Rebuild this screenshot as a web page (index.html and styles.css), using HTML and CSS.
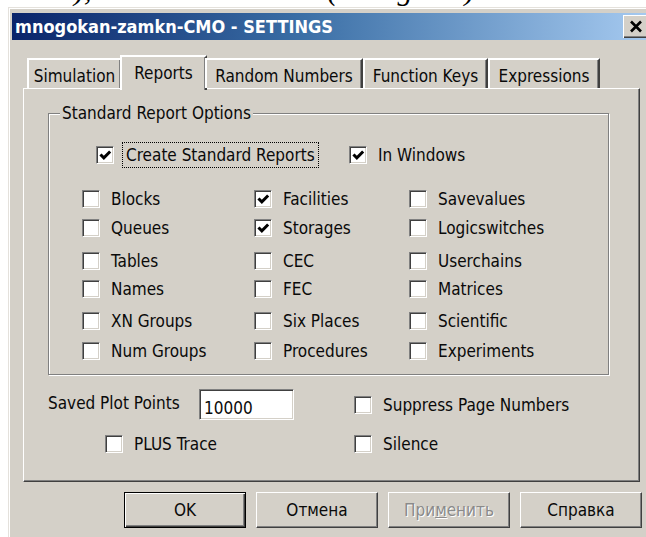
FILE: index.html
```html
<!DOCTYPE html>
<html lang="en">
<head>
<meta charset="utf-8">
<title>mnogokan-zamkn-CMO - SETTINGS</title>
<link rel="stylesheet" href="styles.css">
</head>
<body>
  <div class="doc-line">
    <div class="doc-text"><span class="g1">),</span><span class="g2">(</span><span class="g3">g</span><span class="g4">)</span></div>
  </div>

  <div class="window">
    <div class="titlebar">
      <span class="title">mnogokan-zamkn-CMO - SETTINGS</span>
      <span class="close-btn">
        <svg width="14" height="13" viewBox="0 0 14 13"><path d="M2 1.5 L12 11.5 M12 1.5 L2 11.5" stroke="#000" stroke-width="2.6" fill="none"/></svg>
      </span>
    </div>

    <div class="tabs">
      <div class="tab tab-sim">Simulation</div>
      <div class="tab tab-rep active">Reports</div>
      <div class="tab tab-rnd">Random Numbers</div>
      <div class="tab tab-fk">Function Keys</div>
      <div class="tab tab-exp">Expressions</div>
    </div>

    <div class="panel">
      <fieldset class="group">
        <legend>Standard Report Options</legend>
        <div class="top-row">
          <label class="cb"><span class="box"><svg viewBox="0 0 14 14"><polyline points="3,6.5 6,9.5 11.5,4" /></svg></span><span class="focus">Create Standard Reports</span></label>
          <label class="cb"><span class="box"><svg viewBox="0 0 14 14"><polyline points="3,6.5 6,9.5 11.5,4" /></svg></span>In Windows</label>
        </div>
        <div class="opts">
          <label class="cb"><span class="box"></span>Blocks</label>
          <label class="cb"><span class="box"><svg viewBox="0 0 14 14"><polyline points="3,6.5 6,9.5 11.5,4" /></svg></span>Facilities</label>
          <label class="cb"><span class="box"></span>Savevalues</label>

          <label class="cb"><span class="box"></span>Queues</label>
          <label class="cb"><span class="box"><svg viewBox="0 0 14 14"><polyline points="3,6.5 6,9.5 11.5,4" /></svg></span>Storages</label>
          <label class="cb"><span class="box"></span>Logicswitches</label>

          <label class="cb"><span class="box"></span>Tables</label>
          <label class="cb"><span class="box"></span>CEC</label>
          <label class="cb"><span class="box"></span>Userchains</label>

          <label class="cb"><span class="box"></span>Names</label>
          <label class="cb"><span class="box"></span>FEC</label>
          <label class="cb"><span class="box"></span>Matrices</label>

          <label class="cb"><span class="box"></span>XN Groups</label>
          <label class="cb"><span class="box"></span>Six Places</label>
          <label class="cb"><span class="box"></span>Scientific</label>

          <label class="cb"><span class="box"></span>Num Groups</label>
          <label class="cb"><span class="box"></span>Procedures</label>
          <label class="cb"><span class="box"></span>Experiments</label>
        </div>
      </fieldset>

      <div class="extras">
        <div class="plot-points">
          <span class="plot-label">Saved Plot Points</span>
          <span class="field">10000</span>
        </div>
        <label class="cb"><span class="box"></span>Suppress Page Numbers</label>
        <label class="cb plus"><span class="box"></span>PLUS Trace</label>
        <label class="cb"><span class="box"></span>Silence</label>
      </div>
    </div>

    <div class="buttons">
      <div class="btn default">OK</div>
      <div class="btn">Отмена</div>
      <div class="btn disabled">При<u>м</u>енить</div>
      <div class="btn">Справка</div>
    </div>
  </div>
</body>
</html>
```
FILE: styles.css
```css
* {
  box-sizing: border-box;
}

body {
  margin: 0;
  width: 646px;
  height: 537px;
  overflow: hidden;
  background: #fff;
  font-family: "DejaVu Sans Condensed", "Liberation Sans", Arial, sans-serif;
  font-size: 17px;
  color: #0a0a0a;
}

/* tail of the document line above the dialog: only descenders show */
.doc-line {
  height: 7px;
  overflow: hidden;
  font-family: "Liberation Serif", "Times New Roman", serif;
  font-style: italic;
  font-size: 30px;
  line-height: 30px;
  color: #000;
}

.doc-text {
  display: flex;
  margin-top: -25px;
  white-space: nowrap;
}

.g1 { margin-left: 74px; }
.g2 { margin-left: 236px; }
.g3 { margin-left: 60px; }
.g4 { margin-left: 52px; }

/* dialog frame */
.window {
  margin-left: 8px;
  width: 646px;
  height: 540px;
  padding: 6px 4px 0 4px;
  background: #d4d0c8;
  box-shadow: inset 1px 1px 0 #e4e1dc, inset 2px 2px 0 #fff;
}

.titlebar {
  height: 27px;
  display: flex;
  align-items: center;
  justify-content: space-between;
  padding-left: 3px;
  background: linear-gradient(to right, #0a246a 0%, #3a6ea5 45%, #a6caf0 100%);
}

.title {
  color: #fff;
  font-weight: bold;
  font-size: 18px;
}

.close-btn {
  width: 25px;
  height: 23px;
  margin-right: 2px;
  display: flex;
  align-items: center;
  justify-content: center;
  background: #d4d0c8;
  box-shadow: inset 1px 1px 0 #fff, inset -1px -1px 0 #404040, inset -2px -2px 0 #808080;
}

/* tab strip */
.tabs {
  position: relative;
  z-index: 1;
  display: flex;
  align-items: flex-end;
  height: 35px;
  margin-top: 15px;
  margin-left: 15px;
}

.tab {
  height: 30px;
  margin-bottom: 2px;
  padding-top: 6px;
  text-align: center;
  line-height: 20px;
  background: #d4d0c8;
  border-top: 2px solid #fff;
  border-left: 2px solid #fff;
  border-right: 2px solid #404040;
  box-shadow: inset -1px 0 0 #808080;
}

.tab-sim { width: 95px; }
.tab-rnd { width: 158px; }
.tab-fk { width: 125px; }
.tab-exp { width: 112px; }

.tab.active {
  width: 87px;
  height: 35px;
  margin: 0 -2px;
  padding-top: 6px;
}

/* page of the selected tab */
.panel {
  width: 617px;
  height: 394px;
  margin-top: -2px;
  margin-left: 11px;
  padding-top: 14px;
  border: 1px solid;
  border-color: #fff #404040 #404040 #fff;
  box-shadow: inset -1px -1px 0 #808080;
}

.group {
  width: 561px;
  margin: 0 0 0 24px;
  padding: 0 0 14px 0;
  border: 1px solid #808080;
  box-shadow: 1px 1px 0 #fff, inset 1px 1px 0 #fff;
}

.group legend {
  margin-left: 11px;
  padding: 0 2px;
  line-height: 20px;
  background: #d4d0c8;
}

.top-row {
  display: grid;
  grid-template-columns: 253px auto;
  align-items: center;
  height: 26px;
  margin-top: 19px;
  margin-left: 47px;
}

.opts {
  display: grid;
  grid-template-columns: 172px 155px auto;
  grid-template-rows: 29px 33px 28px 32px 30px 18px;
  align-items: start;
  margin-top: 22px;
  margin-left: 33px;
}

/* checkbox with its caption */
.cb {
  display: flex;
  align-items: center;
  gap: 11px;
  height: 18px;
  line-height: 18px;
  white-space: nowrap;
}

.box {
  flex: none;
  width: 18px;
  height: 18px;
  background: #fff;
  border: 1px solid;
  border-color: #808080 #fff #fff #808080;
  box-shadow: inset 1px 1px 0 #404040, inset -1px -1px 0 #d4d0c8;
}

.box svg {
  display: block;
  width: 16px;
  height: 16px;
}

.box polyline {
  fill: none;
  stroke: #000;
  stroke-width: 2.6;
}

.focus {
  margin-left: -2px;
  padding: 2px 3px 2px 3px;
  line-height: 20px;
  outline: 1px dotted #000;
}

/* controls under the group box */
.extras {
  display: grid;
  grid-template-columns: 306px auto;
  grid-template-rows: 31px 18px;
  row-gap: 15px;
  align-items: center;
  margin-top: 14px;
  margin-left: 24px;
}

.plot-points {
  display: flex;
  align-items: center;
  height: 31px;
}

.plot-label {
  width: 151px;
  margin-top: -4px;
}

.field {
  width: 95px;
  height: 31px;
  padding: 9px 0 0 4px;
  line-height: 18px;
  background: #fff;
  border: 1px solid;
  border-color: #808080 #fff #fff #808080;
  box-shadow: inset 1px 1px 0 #404040, inset -1px -1px 0 #d4d0c8;
}

.plus {
  margin-left: 57px;
}

/* dialog buttons */
.buttons {
  display: flex;
  gap: 10px;
  margin-top: 10px;
  margin-left: 112px;
}

.btn {
  width: 122px;
  height: 36px;
  display: flex;
  align-items: center;
  justify-content: center;
  border: 1px solid;
  border-color: #fff #404040 #404040 #fff;
  box-shadow: inset -1px -1px 0 #808080;
}

.btn.default {
  border: 1px solid #000;
  box-shadow: inset 1px 1px 0 #fff, inset -1px -1px 0 #404040, inset -2px -2px 0 #808080;
}

.btn.disabled {
  color: #8a8a8a;
  text-shadow: 1px 1px 0 #fff;
}
```
